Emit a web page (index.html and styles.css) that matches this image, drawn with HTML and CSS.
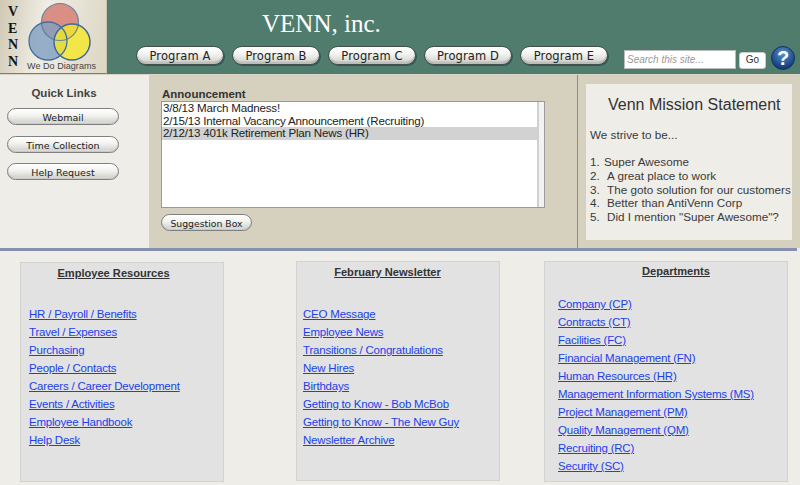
FILE: index.html
```html
<!DOCTYPE html>
<html lang="en">
<head>
<meta charset="utf-8">
<title>VENN, inc.</title>
<link rel="stylesheet" href="styles.css">
</head>
<body>
<header class="header">
  <div class="logo">
    <div class="logo-letters"><span>V</span><span>E</span><span>N</span><span>N</span></div>
    <div class="logo-art">
      <svg class="logo-svg" width="72" height="61" viewBox="0 0 72 61">
        <circle cx="33" cy="22" r="18.500" fill="#d98f84"/>
        <circle cx="21" cy="41" r="19" fill="#7f9fc2" fill-opacity=".8"/>
        <circle cx="45" cy="42" r="18" fill="#f4e72a" fill-opacity=".82"/>
        <circle cx="33" cy="22" r="18.500" fill="none" stroke="#4a74a0" stroke-opacity=".8" stroke-width="1.200"/>
        <circle cx="21" cy="41" r="19" fill="none" stroke="#44709e" stroke-width="1.300"/>
        <circle cx="45" cy="42" r="18" fill="none" stroke="#3f6a9a" stroke-width="1.500"/>
      </svg>
      <div class="logo-tag">We Do Diagrams</div>
    </div>
  </div>
  <div class="header-main">
    <h1 class="brand">VENN, inc.</h1>
    <div class="toolbar">
      <nav class="programs">
        <a class="pill pill-program" href="#">Program A</a>
        <a class="pill pill-program" href="#">Program B</a>
        <a class="pill pill-program" href="#">Program C</a>
        <a class="pill pill-program" href="#">Program D</a>
        <a class="pill pill-program" href="#">Program E</a>
      </nav>
      <form class="search">
        <input class="search-input" type="text" placeholder="Search this site...">
        <button class="search-go" type="button">Go</button>
        <span class="help">?</span>
      </form>
    </div>
  </div>
</header>
<section class="top">
  <aside class="quick">
    <h2 class="quick-title">Quick Links</h2>
    <a class="pill pill-quick" href="#">Webmail</a>
    <a class="pill pill-quick" href="#">Time Collection</a>
    <a class="pill pill-quick" href="#">Help Request</a>
  </aside>
  <div class="announce">
    <h2 class="announce-title">Announcement</h2>
    <div class="listbox">
      <ul class="list-items">
        <li>3/8/13 March Madness!</li>
        <li>2/15/13 Internal Vacancy Announcement (Recruiting)</li>
        <li class="selected">2/12/13 401k Retirement Plan News (HR)</li>
      </ul>
      <div class="scrolltrack"></div>
    </div>
    <a class="pill pill-suggest" href="#">Suggestion Box</a>
  </div>
  <div class="mission">
    <div class="mission-card">
      <h2 class="mission-title">Venn Mission Statement</h2>
      <p class="mission-intro">We strive to be...</p>
      <ol class="mission-list">
        <li><span>1.</span><span class="one">Super Awesome</span></li>
        <li><span>2.</span><span>A great place to work</span></li>
        <li><span>3.</span><span>The goto solution for our customers</span></li>
        <li><span>4.</span><span>Better than AntiVenn Corp</span></li>
        <li><span>5.</span><span>Did I mention "Super Awesome"?</span></li>
      </ol>
    </div>
  </div>
</section>
<div class="rule"></div>
<section class="columns">
  <div class="card card-a">
    <h3 class="card-title">Employee Resources</h3>
    <ul class="links links-spaced">
      <li><a href="#">HR / Payroll / Benefits</a></li>
      <li><a href="#">Travel / Expenses</a></li>
      <li><a href="#">Purchasing</a></li>
      <li><a href="#">People / Contacts</a></li>
      <li><a href="#">Careers / Career Development</a></li>
      <li><a href="#">Events / Activities</a></li>
      <li><a href="#">Employee Handbook</a></li>
      <li><a href="#">Help Desk</a></li>
    </ul>
  </div>
  <div class="card card-b">
    <h3 class="card-title">February Newsletter</h3>
    <ul class="links links-spaced">
      <li><a href="#">CEO Message</a></li>
      <li><a href="#">Employee News</a></li>
      <li><a href="#">Transitions / Congratulations</a></li>
      <li><a href="#">New Hires</a></li>
      <li><a href="#">Birthdays</a></li>
      <li><a href="#">Getting to Know - Bob McBob</a></li>
      <li><a href="#">Getting to Know - The New Guy</a></li>
      <li><a href="#">Newsletter Archive</a></li>
    </ul>
  </div>
  <div class="card card-c">
    <h3 class="card-title">Departments</h3>
    <ul class="links">
      <li><a href="#">Company (CP)</a></li>
      <li><a href="#">Contracts (CT)</a></li>
      <li><a href="#">Facilities (FC)</a></li>
      <li><a href="#">Financial Management (FN)</a></li>
      <li><a href="#">Human Resources (HR)</a></li>
      <li><a href="#">Management Information Systems (MS)</a></li>
      <li><a href="#">Project Management (PM)</a></li>
      <li><a href="#">Quality Management (QM)</a></li>
      <li><a href="#">Recruiting (RC)</a></li>
      <li><a href="#">Security (SC)</a></li>
    </ul>
  </div>
</section>
</body>
</html>
```
FILE: styles.css
```css
* { box-sizing: border-box; }
html, body { margin: 0; padding: 0; }
body {
  width: 800px;
  height: 485px;
  overflow: hidden;
  background: #eeede8;
  font-family: "Liberation Sans", Arial, sans-serif;
  color: #333;
}
h1, h2, h3, p, ul, ol { margin: 0; padding: 0; list-style: none; }

.header {
  display: flex;
  height: 75px;
  background: #507c6e;
  border-bottom: 1px solid #d9d5c6;
}
.logo {
  flex: none;
  width: 107px;
  height: 74px;
  display: flex;
  padding-left: 8px;
  background: linear-gradient(100deg, #cfc8b3 0%, #efede4 40%, #dcd6c3 100%);
  border-right: 1px solid #c9c4b0;
  border-bottom: 1px solid #5f80a8;
}
.logo-letters {
  flex: none;
  width: 19px;
  padding-top: 4px;
  font: bold 14px/16.500px "Liberation Serif", serif;
  color: #151515;
}
.logo-letters span { display: block; height: 16.500px; }
.logo-art { flex: none; width: 72px; }
.logo-svg { display: block; }
.logo-tag {
  font-size: 9px;
  line-height: 10px;
  letter-spacing: .05px;
  color: #444;
  white-space: nowrap;
}
.header-main {
  flex: 1;
  display: flex;
  flex-direction: column;
}
.brand {
  height: 45px;
  padding: 9px 0 0 155px;
  font: normal 25px/30px "Liberation Serif", serif;
  color: #fff;
}
.toolbar {
  display: flex;
  padding-left: 29px;
}
.programs {
  display: flex;
  flex: none;
  gap: 8px;
}
.pill {
  display: block;
  text-align: center;
  text-decoration: none;
  font-family: "DejaVu Sans", sans-serif;
  color: #222;
  border: 1px solid #777;
  border-radius: 10px;
  background: linear-gradient(#fff 0%, #f4f4f2 40%, #d6d6d2 85%, #ececea 100%);
  box-shadow: inset 0 -1px 1px rgba(0,0,0,.15);
  white-space: nowrap;
}
.pill-program {
  width: 88px;
  height: 19px;
  margin-top: 1px;
  font-size: 11.500px;
  letter-spacing: .12px;
  line-height: 19px;
  border: 1px solid #3f4f4a;
  box-shadow: inset 0 -2px 2px rgba(0,0,0,.2), 1px 1px 0 rgba(30,50,45,.5);
}
.search {
  display: flex;
  align-items: flex-start;
  margin-left: 16px;
}
.search-input {
  width: 112px;
  height: 19px;
  margin-top: 5px;
  padding: 0 2px;
  border: 1px solid #bbb;
  background: #fff;
  font: italic 10px "Liberation Sans", sans-serif;
  color: #888;
}
.search-input::placeholder { color: #999; opacity: 1; }
.search-go {
  width: 27px;
  height: 17px;
  margin: 7px 0 0 3px;
  padding: 0 0 2px;
  border: 1px solid #ccc;
  border-radius: 3px;
  background: #fff;
  font: 10px "Liberation Sans", sans-serif;
  color: #333;
}
.help {
  flex: none;
  width: 24px;
  height: 24px;
  margin: 1px 0 0 5px;
  border-radius: 50%;
  border: 1px solid #12305c;
  background: radial-gradient(circle at 50% 30%, #5a90cc, #123f7e 75%);
  font: bold 20px/23px "Liberation Sans", sans-serif;
  color: #fff;
  text-align: center;
}

.top {
  display: flex;
  height: 173px;
}
.quick {
  flex: none;
  width: 149px;
  padding: 11px 0 0 7px;
}
.quick-title {
  width: 112px;
  padding-left: 2px;
  font-size: 11.500px;
  line-height: 14px;
  font-weight: bold;
  text-align: center;
  color: #444;
  margin-bottom: 8px;
}
.pill-quick {
  width: 112px;
  height: 17px;
  margin-bottom: 10.500px;
  border-color: #808080;
  font-size: 9.500px;
  line-height: 18px;
  border-radius: 9px;
}
.announce {
  flex: none;
  width: 428px;
  padding: 13px 0 0 12px;
  background: #d6d0bf;
}
.announce-title {
  padding-left: 1px;
  font-size: 11.500px;
  line-height: 13px;
  font-weight: bold;
  color: #333;
}
.listbox {
  width: 384px;
  height: 107px;
  display: flex;
  border: 1px solid #999;
  background: #fff;
}
.list-items {
  flex: 1;
  font-size: 11.600px;
  letter-spacing: -.2px;
  color: #222;
}
.list-items li { height: 12.500px; line-height: 11px; padding-left: 1px; white-space: nowrap; }
.list-items .selected { background: #d2d2d2; }
.scrolltrack {
  width: 7px;
  border-left: 2px solid #cfd0d2;
  background: #f3f3f4;
}
.pill-suggest {
  width: 91px;
  height: 17px;
  margin-top: 6px;
  border-color: #808080;
  font-size: 9.300px;
  line-height: 18px;
  border-radius: 9px;
}
.mission {
  flex: none;
  width: 223px;
  padding: 9px 8px 8px 8px;
  background: #d6d0bf;
  border-left: 1px solid #8e8e82;
}
.mission-card {
  height: 156px;
  padding: 12px 0 0 4px;
  background: #eeede8;
  color: #3a3a3a;
}
.mission-title {
  font-size: 16px;
  font-weight: normal;
  line-height: 18px;
  padding-left: 18px;
  white-space: nowrap;
  color: #333;
}
.mission-intro {
  margin-top: 14px;
  font-size: 11.700px;
  line-height: 14px;
}
.mission-list {
  margin-top: 13px;
  font-size: 11.700px;
  line-height: 13.750px;
  white-space: nowrap;
}
.mission-list li { display: flex; }
.mission-list li span:first-child { width: 17px; }
.mission-list .one { margin-left: -3px; }

.rule {
  width: 797px;
  height: 3px;
  background: #8490ad;
}
.columns {
  display: flex;
  align-items: flex-start;
  padding: 10px 0 0 20px;
}
.card {
  flex: none;
  width: 204px;
  height: 220px;
  padding-top: 3px;
  background: #e2e2e2;
  border: 1px solid #d2d2ce;
}
.card-a { margin-top: 1px; padding-left: 8px; }
.card-a .links { margin-top: 25px; }
.card-b { margin-left: 72px; padding-left: 6px; }
.card-c { margin-left: 44px; width: 244px; height: 221px; padding-top: 2px; padding-left: 13px; }
.card-a .card-title { padding-right: 25px; }
.card-b .card-title { padding-right: 27px; }
.card-c .card-title { padding-left: 7px; }
.card-title {
  font-size: 11.100px;
  line-height: 14px;
  font-weight: bold;
  text-align: center;
  text-decoration: underline;
  color: #333;
}
.links { margin-top: 17px; font-size: 11.500px; letter-spacing: -.21px; line-height: 18px; }
.links-spaced { margin-top: 26px; }
.links a { color: #1c3fe8; white-space: nowrap; }
```
